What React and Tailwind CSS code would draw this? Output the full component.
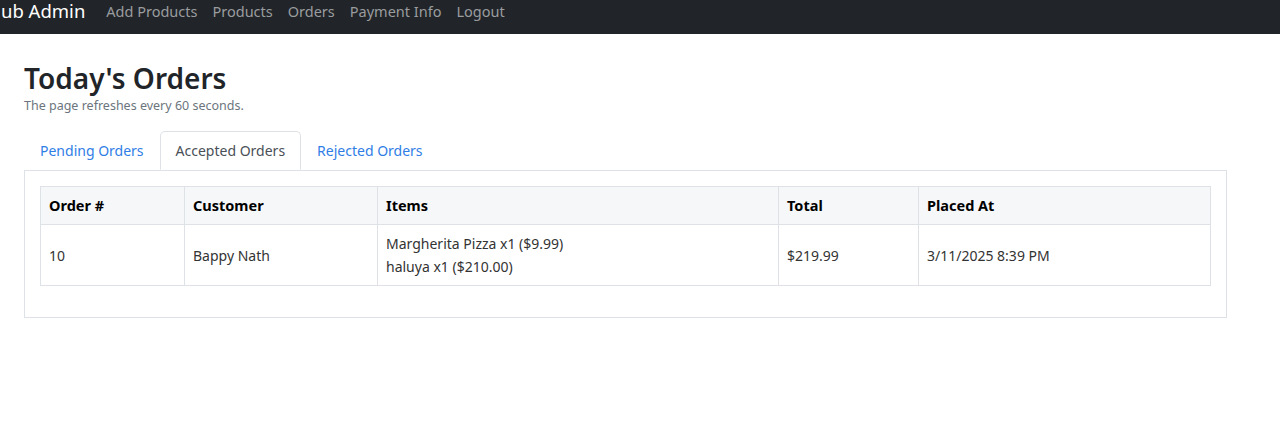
import React from 'react';

const navLinks = ['Add Products', 'Products', 'Orders', 'Payment Info', 'Logout'];
const tabs = ['Pending Orders', 'Accepted Orders', 'Rejected Orders'];

const orders = [
  {
    id: 10,
    customer: 'Bappy Nath',
    items: ['Margherita Pizza x1 ($9.99)', 'haluya x1 ($210.00)'],
    total: '$219.99',
    placedAt: '3/11/2025 8:39 PM',
  },
];

const App = () => {
  const active = 'Accepted Orders';

  return (
    <div className="w-full min-h-[429px] bg-white text-[#212529] font-['Noto_Sans',sans-serif]">
      {/* Navbar */}
      <nav className="h-[34px] bg-[#212529] flex items-start pl-[1px]">
        <span className="text-white text-[18.5px] leading-[22px] mr-[21px]">ub Admin</span>
        <div className="flex items-center gap-[15px] pt-[2px]">
          {navLinks.map((l) => (
            <a key={l} className="text-[#9a9c9f] text-[14.5px] leading-[18px]">{l}</a>
          ))}
        </div>
      </nav>

      <div className="px-6 pt-[26px]">
        <h2 className="text-[28px] font-semibold leading-[36px] text-[#212529]">Today's Orders</h2>
        <p className="text-[12.5px] text-[#6c757d] leading-4 mt-[2px]">The page refreshes every 60 seconds.</p>

        {/* Tabs */}
        <div className="mt-[17px] flex border-b border-[#dee2e6] w-[1203px]">
          {tabs.map((t) => (
            <div
              key={t}
              className={
                t === active
                  ? 'h-[39px] px-[15px] flex items-center text-[14px] text-[#495057] bg-white border border-[#dee2e6] border-b-white rounded-t-[5px] -mb-[1px]'
                  : 'h-[39px] px-[15px] flex items-center text-[14px] text-[#2f7ee6] border border-transparent'
              }
            >
              {t}
            </div>
          ))}
        </div>

        {/* Tab panel */}
        <div className="w-[1203px] border border-t-0 border-[#dee2e6] p-[15px] pb-[31px]">
          <table className="w-[1171px] border-collapse text-[14px]">
            <thead>
              <tr className="bg-[#f6f7f9] text-[14.5px]">
                <th className="w-[144px] h-[38px] border border-[#dee2e6] px-2 text-left font-bold text-black">Order #</th>
                <th className="w-[193px] border border-[#dee2e6] px-2 text-left font-bold text-black">Customer</th>
                <th className="w-[401px] border border-[#dee2e6] px-2 text-left font-bold text-black">Items</th>
                <th className="w-[140px] border border-[#dee2e6] px-2 text-left font-bold text-black">Total</th>
                <th className="border border-[#dee2e6] px-2 text-left font-bold text-black">Placed At</th>
              </tr>
            </thead>
            <tbody>
              {orders.map((o) => (
                <tr key={o.id} className="text-[#333]">
                  <td className="h-[61px] border border-[#dee2e6] px-2">{o.id}</td>
                  <td className="border border-[#dee2e6] px-2">{o.customer}</td>
                  <td className="border border-[#dee2e6] px-2 leading-[23px]">
                    {o.items.map((i) => (
                      <div key={i}>{i}</div>
                    ))}
                  </td>
                  <td className="border border-[#dee2e6] px-2">{o.total}</td>
                  <td className="border border-[#dee2e6] px-2">{o.placedAt}</td>
                </tr>
              ))}
            </tbody>
          </table>
        </div>
      </div>
    </div>
  );
};

export default App;
